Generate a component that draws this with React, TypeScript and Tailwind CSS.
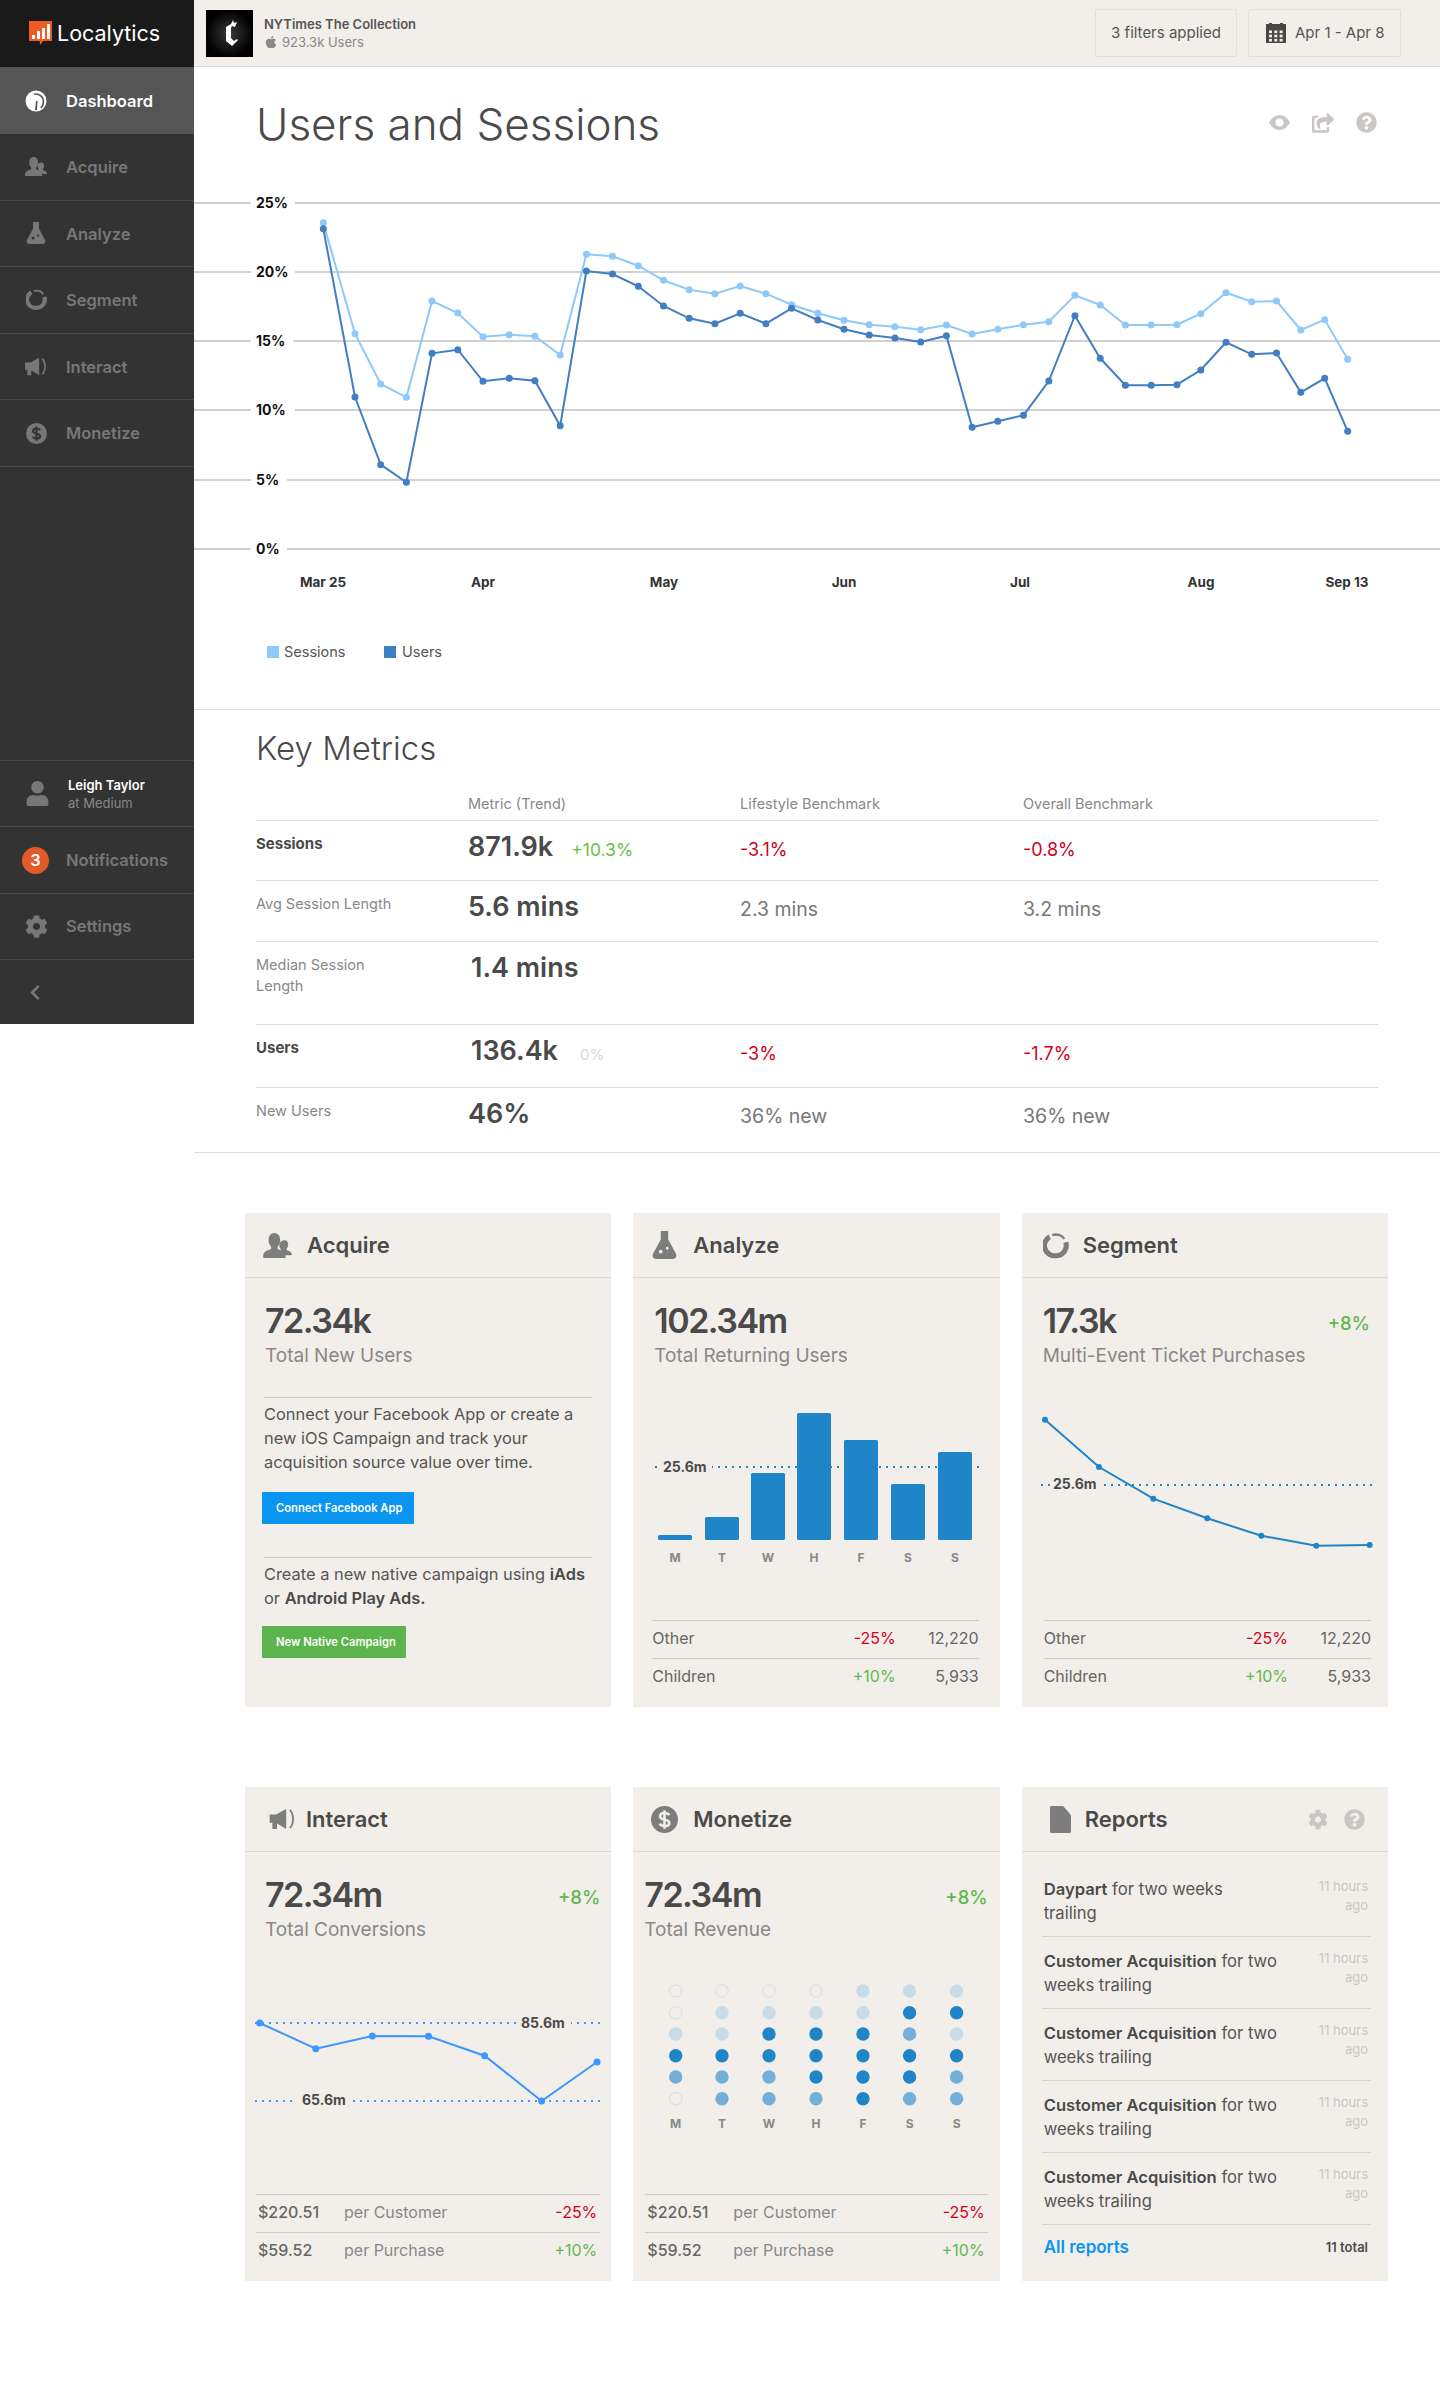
import { FaApple, FaChevronLeft, FaCog, FaQuestionCircle, FaShareSquare, FaUser } from "react-icons/fa";
import type { ReactNode } from "react";

// chart points, in page pixels
const X = [
  323.3, 355, 380.7, 406.4, 432, 457.8, 483, 509.2, 534.9, 560.2, 586.4, 612.5, 638.3, 663.5, 689.2, 714.9, 740.2,
  765.9, 791.6, 817.8, 844, 869.2, 894.9, 920.7, 946.4, 972.1, 997.8, 1023.5, 1048.8, 1074.9, 1100.2, 1125.4, 1151.2,
  1176.9, 1200.8, 1226, 1251.7, 1276.5, 1300.8, 1324.7, 1347.7,
];
const SESSIONS = [
  222.7, 333.7, 384, 397.3, 301, 313, 336.7, 334.7, 336.3, 355, 254.3, 256.3, 265.7, 280.3, 289.7, 293.7, 286, 293.7,
  304.7, 313.3, 320.3, 324.7, 326.7, 329.7, 325, 334, 329.3, 324.7, 321.7, 295.3, 305, 325, 325, 324.7, 313.7, 292.7,
  301.7, 301, 330, 319.7, 359.3,
];
const USERS = [
  228.7, 397, 464.7, 482.3, 353.3, 349.7, 381.3, 378.3, 380.7, 425.7, 271, 274, 286.3, 306, 318.3, 323.7, 313.3, 323.7,
  308.3, 320, 329.3, 335, 338, 342, 335.7, 427.3, 421.3, 415.3, 381, 315.7, 358.3, 385.3, 385.3, 384.7, 370, 342.3,
  354.3, 353, 392.3, 378.3, 431.3,
];
const GRID = [
  { y: 203, label: "25%", w: 44 },
  { y: 272, label: "20%", w: 44 },
  { y: 341, label: "15%", w: 42 },
  { y: 410, label: "10%", w: 44 },
  { y: 480, label: "5%", w: 36 },
  { y: 549, label: "0%", w: 36 },
];
const MONTHS = [
  { x: 323, t: "Mar 25" },
  { x: 483, t: "Apr" },
  { x: 664, t: "May" },
  { x: 844, t: "Jun" },
  { x: 1020, t: "Jul" },
  { x: 1201, t: "Aug" },
  { x: 1347, t: "Sep 13" },
];

const BARS = [
  { x: 658, top: 1535, d: "M" },
  { x: 705, top: 1517, d: "T" },
  { x: 751, top: 1473, d: "W" },
  { x: 797, top: 1413, d: "H" },
  { x: 844, top: 1440, d: "F" },
  { x: 891, top: 1484, d: "S" },
  { x: 938, top: 1452, d: "S" },
];

const DOTS = [
  { x: 675.7, d: "M", v: "ooldmo" },
  { x: 722, d: "T", v: "olldmm" },
  { x: 769, d: "W", v: "olddmm" },
  { x: 816, d: "H", v: "oldddm" },
  { x: 863, d: "F", v: "lldddd" },
  { x: 909.6, d: "S", v: "ldmddm" },
  { x: 956.6, d: "S", v: "ldldmm" },
];
const DOT_ROWS = [1991, 2012.7, 2034, 2055.7, 2077, 2098.7];
const DOT_FILL: Record<string, string> = { l: "#c7dce7", m: "#74afd9", d: "#2084c8" };

const pts = (xs: number[], ys: number[]) => xs.map((x, i) => `${x},${ys[i]}`).join(" ");

function GaugeIcon() {
  return (
    <svg width="22" height="22" viewBox="0 0 22 22">
      <circle cx="11" cy="11" r="10.5" fill="#fff" />
      <path d="M9 4.2a7.6 7.6 0 0 1 9.4 7.6c0 2.6-1 4.8-2.6 6.2" fill="none" stroke="#555" strokeWidth="1.6" />
      <path d="M10 20l1-9 1.6 0 -.6 9z" fill="#555" />
    </svg>
  );
}

function UsersIcon({ className }: { className?: string }) {
  return (
    <svg className={className} viewBox="0 0 32 28" fill="currentColor">
      <path d="M24 8c2.6 0 4 2.4 4 5 0 2-.8 3.6-1.8 4.6v1.4c2 .9 5.800 1.800 5.800 4.500v1.500h-8c-.8-2.500-3-3.600-5.500-4.700l1.300-.6v-1.600c-1-1-1.800-2.700-1.800-5 0-2.700 3-5.100 6-5.100z" />
      <path d="M12.500 0c4 0 6.500 3.400 6.500 8 0 3.200-1.200 5.700-2.800 7.200v2.800c3.500 1.600 8.800 2.800 8.800 7v3H0v-3c0-4.200 5.300-5.400 8.800-7v-2.800C7.200 13.700 6 11.200 6 8c0-4.600 2.500-8 6.500-8z" />
    </svg>
  );
}

function FlaskIcon({ className }: { className?: string }) {
  return (
    <svg className={className} viewBox="0 0 26 30" fill="currentColor">
      <path
        fillRule="evenodd"
        d="M9 0h8v9l8.300 15.500C26.500 27 25 30 22 30H4c-3 0-4.500-3-3.300-5.500L9 9zM9 20a2 2 0 1 0 0 4 2 2 0 0 0 0-4zm7-3a1.500 1.500 0 1 0 0 3 1.500 1.500 0 0 0 0-3z"
      />
    </svg>
  );
}

function SegmentIcon({ className }: { className?: string }) {
  return (
    <svg className={className} viewBox="0 0 28 28" fill="none" stroke="currentColor">
      <path d="M7.200 4.500A11 11 0 0 0 14 25a11 11 0 0 0 10.500-14.500" strokeWidth="5.500" />
      <path d="M10 2.900a11 11 0 0 1 13 4" strokeWidth="2.500" />
      <path d="M2.500 8l3 1.500" strokeWidth="3" />
    </svg>
  );
}

function HornIcon({ className }: { className?: string }) {
  return (
    <svg className={className} viewBox="0 0 28 24" fill="currentColor">
      <path d="M0 7h7l11-6v22L8 17v6H3v-7H0z" />
      <path d="M22 2c2.500 2.500 3.500 6 3.500 10s-1 7.500-3.500 10" fill="none" stroke="currentColor" strokeWidth="2" />
    </svg>
  );
}

function DollarIcon({ className, hole = "#f2efea" }: { className?: string; hole?: string }) {
  return (
    <svg className={className} viewBox="0 0 28 28">
      <circle cx="14" cy="14" r="14" fill="currentColor" />
      <path
        d="M19 9.500c-1-1.600-2.800-2.300-5-2.300-2.700 0-4.600 1.400-4.600 3.500 0 4.800 9.600 2.400 9.600 6.800 0 2-2 3.300-5 3.300-2.300 0-4-.8-5-2.500M14 4.500v19"
        fill="none"
        stroke={hole}
        strokeWidth="2.700"
      />
    </svg>
  );
}

function FileIcon({ className }: { className?: string }) {
  return (
    <svg className={className} viewBox="0 0 21 27" fill="currentColor">
      <path d="M1.500 0H12c1 0 1.500.4 2 1l6 7c.6.7 1 1.300 1 2v15.500c0 .9-.6 1.500-1.500 1.500h-18C.6 27 0 26.400 0 25.500v-24C0 .6.600 0 1.500 0z" />
    </svg>
  );
}

function EyeIcon() {
  return (
    <svg width="21" height="15" viewBox="0 0 21 15">
      <path d="M0 7.500C2.500 3 6 0 10.500 0S18.500 3 21 7.500C18.500 12 15 15 10.500 15S2.500 12 0 7.500z" fill="#c9c6c4" />
      <circle cx="10.500" cy="7.500" r="4" fill="#fff" />
    </svg>
  );
}

function CalendarIcon() {
  const cells = [];
  for (let r = 0; r < 3; r++) {
    for (let c = 0; c < 3; c++) {
      cells.push(<rect key={`${r}-${c}`} x={3 + c * 5.3} y={7.5 + r * 4.2} width="3" height="2.600" fill="#f2efea" />);
    }
  }
  return (
    <svg width="20" height="20" viewBox="0 0 20 20">
      <path d="M0 1h3V0h3v1h8V0h3v1h3v19H0z" fill="#4a4746" />
      {cells}
    </svg>
  );
}

function GothicMark() {
  return (
    <div className="w-[47px] h-[47px] bg-[radial-gradient(circle,#3a3a3a_0%,#000_70%)] flex items-center justify-center">
      <svg width="16" height="26" viewBox="0 0 16 26" fill="#fff">
        <path d="M11 0l1 3 3-1-2 5-3-1-1 2v10l3 3 3-2 1 1-6 6-6-5V7l5-3z" />
      </svg>
    </div>
  );
}

function LogoMark() {
  return (
    <svg width="24" height="25" viewBox="0 0 24 25">
      <path d="M0 0h23v20h-9l-2.500 4-1-4H0z" fill="#f15a24" />
      <rect x="3" y="14" width="3" height="4" fill="#fff" />
      <rect x="8" y="10" width="3" height="8" fill="#fff" />
      <rect x="13" y="7" width="3" height="11" fill="#fff" />
      <rect x="18" y="3" width="3" height="15" fill="#fff" />
    </svg>
  );
}

function NavRow({ icon, label, h = "h-[66.6px]", active }: { icon: ReactNode; label: string; h?: string; active?: boolean }) {
  return (
    <div
      className={`${h} flex items-center pl-[24px] gap-[18px] text-[16.5px] font-semibold ${
        active ? "bg-[#555] text-white" : "border-b border-[#4a4a4a] text-[#777]"
      }`}
    >
      <div className="w-[24px] flex justify-center shrink-0">{icon}</div>
      <span className="pt-[1px]">{label}</span>
    </div>
  );
}

function Sidebar() {
  return (
    <aside className="w-[194px] h-[1024px] shrink-0 bg-[#333] flex flex-col">
      <div className="h-[67px] bg-[#1a1a1a] flex items-center pl-[29px] gap-[4px] text-white text-[21.5px]">
        <LogoMark />
        <span>Localytics</span>
      </div>
      <NavRow active h="h-[67px]" icon={<GaugeIcon />} label="Dashboard" />
      <NavRow icon={<UsersIcon className="w-[22px] h-[19px]" />} label="Acquire" />
      <NavRow icon={<FlaskIcon className="w-[20px] h-[22px]" />} label="Analyze" />
      <NavRow icon={<SegmentIcon className="w-[21px] h-[21px]" />} label="Segment" />
      <NavRow icon={<HornIcon className="w-[22px] h-[19px]" />} label="Interact" />
      <NavRow icon={<DollarIcon className="w-[21px] h-[21px] text-[#777]" hole="#333" />} label="Monetize" />

      <div className="mt-auto">
        <div className="h-[66px] border-t border-[#4a4a4a] flex items-center pl-[25px] gap-[18px]">
          <FaUser className="w-[25px] h-[25px] text-[#777]" />
          <div className="text-[13px] leading-[18px]">
            <div className="text-white font-semibold">Leigh Taylor</div>
            <div className="text-[#888]">at Medium</div>
          </div>
        </div>
        <div className="h-[67px] border-t border-[#4a4a4a] flex items-center pl-[22px] gap-[17px] text-[16.5px] font-semibold text-[#777]">
          <div className="w-[27px] h-[27px] rounded-full bg-[#e25a28] text-white flex items-center justify-center">3</div>
          <span>Notifications</span>
        </div>
        <div className="h-[66px] border-t border-[#4a4a4a] flex items-center pl-[25px] gap-[18px] text-[16.5px] font-semibold text-[#777]">
          <FaCog className="w-[23px] h-[23px]" />
          <span>Settings</span>
        </div>
        <div className="h-[65px] border-t border-[#4a4a4a] flex items-center pl-[28px]">
          <FaChevronLeft className="w-[14px] h-[17px] text-[#777]" />
        </div>
      </div>
    </aside>
  );
}

function TopBar() {
  return (
    <header className="h-[67px] bg-[#f2efea] border-b border-[#dcd9d4] flex items-center pl-[12px] pr-[39px]">
      <GothicMark />
      <div className="ml-[11px] text-[13px] leading-[18px]">
        <div className="font-semibold text-[#555]">NYTimes The Collection</div>
        <div className="flex items-center gap-[4px] text-[#888]">
          <FaApple className="w-[14px] h-[14px]" />
          <span>923.3k Users</span>
        </div>
      </div>
      <div className="ml-auto w-[142px] h-[48px] border border-[#e4e1db] rounded-[2px] flex items-center justify-center text-[15px] text-[#555]">
        3 filters applied
      </div>
      <div className="ml-[11px] w-[153px] h-[48px] border border-[#e4e1db] rounded-[2px] flex items-center pl-[17px] gap-[9px] text-[15px] text-[#555]">
        <CalendarIcon />
        <span>Apr 1 - Apr 8</span>
      </div>
    </header>
  );
}

function TrendChart() {
  return (
    <svg className="block w-[1246px] h-[410px]" viewBox="194 190 1246 410">
      {GRID.map((g) => (
        <g key={g.y}>
          <line x1="194" x2="1440" y1={g.y} y2={g.y} stroke="#a3a3a3" strokeWidth="1" />
          <rect x="251" y={g.y - 8} width={g.w} height="16" fill="#fff" />
          <text x="256" y={g.y + 5} className="text-[14px] font-bold fill-[#111]">
            {g.label}
          </text>
        </g>
      ))}
      <polyline points={pts(X, SESSIONS)} fill="none" stroke="#8ec9f9" strokeWidth="2" />
      {X.map((x, i) => (
        <circle key={i} cx={x} cy={SESSIONS[i]} r="3.5" fill="#8ec9f9" />
      ))}
      <polyline points={pts(X, USERS)} fill="none" stroke="#427ec2" strokeWidth="2" />
      {X.map((x, i) => (
        <circle key={i} cx={x} cy={USERS[i]} r="3.5" fill="#427ec2" />
      ))}
      {MONTHS.map((m) => (
        <text key={m.t} x={m.x} y="587" textAnchor="middle" className="text-[13.5px] font-bold fill-[#333]">
          {m.t}
        </text>
      ))}
    </svg>
  );
}

function UsersSessions() {
  return (
    <section className="h-[643px] border-b border-[#dddddd] relative">
      <h1 className="h-[123px] pl-[62px] pt-[34px] text-[44px] leading-[46px] font-light text-[#4a4a4a]">Users and Sessions</h1>
      <div className="absolute right-[63px] top-[45px] flex items-center gap-[22px] text-[#c9c6c4]">
        <EyeIcon />
        <FaShareSquare className="w-[22px] h-[20px]" />
        <FaQuestionCircle className="w-[21px] h-[21px]" />
      </div>
      <TrendChart />
      <div className="pl-[73px] pt-[41px] flex items-center text-[14.5px] text-[#555]">
        <span className="w-[12px] h-[12px] bg-[#8ecbfb]" />
        <span className="ml-[5px] w-[100px]">Sessions</span>
        <span className="w-[12px] h-[12px] bg-[#3b7fc4]" />
        <span className="ml-[6px]">Users</span>
      </div>
    </section>
  );
}

type MetricRow = {
  label: string;
  strong?: boolean;
  value: string;
  inset?: boolean;
  trend?: ReactNode;
  life?: ReactNode;
  over?: ReactNode;
  h: string;
  border?: boolean;
};

const red = (t: string) => <span className="text-[18px] text-[#d0021b]">{t}</span>;

const METRICS: MetricRow[] = [
  {
    label: "Sessions",
    strong: true,
    value: "871.9k",
    trend: <span className="ml-[18px] text-[17.5px] text-[#6abf45]">+10.3%</span>,
    life: red("-3.1%"),
    over: red("-0.8%"),
    h: "h-[60px]",
    border: true,
  },
  { label: "Avg Session Length", value: "5.6 mins", life: "2.3 mins", over: "3.2 mins", h: "h-[61px]", border: true },
  { label: "Median Session Length", value: "1.4 mins", inset: true, h: "h-[83px]", border: true },
  {
    label: "Users",
    strong: true,
    value: "136.4k",
    inset: true,
    trend: <span className="ml-[22px] text-[15px] text-[#d8d8d8]">0%</span>,
    life: red("-3%"),
    over: red("-1.7%"),
    h: "h-[63px]",
    border: true,
  },
  { label: "New Users", value: "46%", life: "36% new", over: "36% new", h: "h-[64px]" },
];

function KeyMetrics() {
  return (
    <section className="border-b border-[#dddddd] pl-[62px] pr-[62px]">
      <h2 className="pt-[18px] h-[70px] text-[33px] leading-[40px] font-light text-[#4a4a4a]">Key Metrics</h2>
      <div className="grid grid-cols-[212px_272px_283px_1fr] h-[41px] pt-[13px] border-b border-[#dddddd] text-[14.5px] text-[#888]">
        <div />
        <div>Metric (Trend)</div>
        <div>Lifestyle Benchmark</div>
        <div>Overall Benchmark</div>
      </div>
      {METRICS.map((m) => (
        <div key={m.label} className={`grid grid-cols-[212px_272px_283px_1fr] ${m.h} ${m.border ? "border-b border-[#dddddd]" : ""}`}>
          <div
            className={`pt-[12px] leading-[21px] pr-[66px] ${
              m.strong ? "text-[15px] font-bold text-[#4a4a4a]" : "text-[14.5px] text-[#888]"
            }`}
          >
            {m.label}
          </div>
          <div className={`pt-[11px] flex items-baseline h-fit ${m.inset ? "pl-[3px]" : ""}`}>
            <span className="text-[27px] leading-[30px] font-semibold text-[#4a4a4a]">{m.value}</span>
            {m.trend}
          </div>
          <div className="pt-[16px] text-[19.5px] leading-[24px] text-[#777]">{m.life}</div>
          <div className="pt-[16px] text-[19.5px] leading-[24px] text-[#777]">{m.over}</div>
        </div>
      ))}
    </section>
  );
}

function Card({ icon, title, right, children }: { icon: ReactNode; title: string; right?: ReactNode; children: ReactNode }) {
  return (
    <div className="h-[494px] bg-[#f2efea] flex flex-col">
      <div className="h-[65px] shrink-0 border-b border-[#dcd9d4] flex items-center">
        {icon}
        <span className="text-[22px] font-semibold text-[#4a4a4a]">{title}</span>
        {right}
      </div>
      {children}
    </div>
  );
}

function Stat({ value, label, delta, x = "pl-[20px] pr-[11px]" }: { value: string; label: string; delta?: string; x?: string }) {
  return (
    <div className={`${x} pt-[23px] shrink-0`}>
      <div className="flex items-center justify-between">
        <span className="text-[34px] leading-[40px] font-semibold tracking-[-1.5px] text-[#4a4a4a]">{value}</span>
        {delta && <span className="mt-[5px] text-[18.5px] font-medium text-[#5fb84f]">{delta}</span>}
      </div>
      <div className="mt-[3px] text-[19px] leading-[24px] text-[#888]">{label}</div>
    </div>
  );
}

function Foot({ rows, x }: { rows: ReactNode[][]; x: string }) {
  return (
    <div className={`mt-auto mb-[12px] ${x} text-[16px] text-[#666]`}>
      {rows.map((r, i) => (
        <div key={i} className="h-[37.5px] pb-[2px] border-t border-[#cfccc8] flex items-center">
          {r}
        </div>
      ))}
    </div>
  );
}

const down = <span className="text-[#d0021b]">-25%</span>;
const up = <span className="text-[#5fb84f]">+10%</span>;

function splitRows(): ReactNode[][] {
  return [
    [
      <span key="a">Other</span>,
      <span key="b" className="ml-auto">{down}</span>,
      <span key="c" className="w-[83px] text-right">12,220</span>,
    ],
    [
      <span key="a">Children</span>,
      <span key="b" className="ml-auto">{up}</span>,
      <span key="c" className="w-[83px] text-right">5,933</span>,
    ],
  ];
}

function perRows(): ReactNode[][] {
  return [
    [
      <span key="a" className="pl-[2px] w-[88px] font-medium">$220.51</span>,
      <span key="b" className="text-[#888]">per Customer</span>,
      <span key="c" className="ml-auto pr-[3px]">{down}</span>,
    ],
    [
      <span key="a" className="pl-[2px] w-[88px] font-medium">$59.52</span>,
      <span key="b" className="text-[#888]">per Purchase</span>,
      <span key="c" className="ml-auto pr-[3px]">{up}</span>,
    ],
  ];
}

function AcquireCard() {
  const para = "text-[16.4px] leading-[24px] text-[#555]";
  return (
    <Card
      icon={<UsersIcon className="ml-[17px] mr-[14px] w-[31px] h-[25px] text-[#7d7d7d]" />}
      title="Acquire"
    >
      <Stat value="72.34k" label="Total New Users" />
      <div className="mx-[19px] mt-[29px] border-t border-[#cfccc8] pt-[4px]">
        <p className={para}>Connect your Facebook App or create a new iOS Campaign and track your acquisition source value over time.</p>
      </div>
      <button className="ml-[17px] mt-[18px] w-[152px] h-[32px] rounded-[1px] bg-[#0a96f0] text-white text-[11.2px] font-semibold text-left pl-[14px]">
        Connect Facebook App
      </button>
      <div className="mx-[19px] mt-[33px] border-t border-[#cfccc8] pt-[4px]">
        <p className={para}>
          Create a new native campaign using <b className="font-semibold text-[#4a4a4a]">iAds</b> or{" "}
          <b className="font-semibold text-[#4a4a4a]">Android Play Ads.</b>
        </p>
      </div>
      <button className="ml-[17px] mt-[16px] w-[144px] h-[32px] rounded-[1px] bg-[#5cb54c] text-white text-[11.2px] font-semibold text-left pl-[14px]">
        New Native Campaign
      </button>
    </Card>
  );
}

function AnalyzeCard() {
  return (
    <Card icon={<FlaskIcon className="ml-[18px] mr-[15px] w-[27px] h-[28px] text-[#7d7d7d]" />} title="Analyze">
      <Stat value="102.34m" label="Total Returning Users" x="pl-[21px] pr-[11px]" />
      <svg className="block mt-[32px] w-[367px] h-[170px] shrink-0" viewBox="633 1400 367 170">
        {BARS.map((b) => (
          <g key={b.x}>
            <rect x={b.x} y={b.top} width="34" height={1540 - b.top} rx="1.5" fill="#2084c8" />
            <text x={b.x + 17} y="1562" textAnchor="middle" className="text-[12px] font-bold fill-[#888]">
              {b.d}
            </text>
          </g>
        ))}
        <line x1="655" x2="981" y1="1467" y2="1467" stroke="#2084c8" strokeWidth="2" strokeDasharray="2 5" />
        <rect x="660" y="1458" width="52" height="18" fill="#f2efea" />
        <text x="663" y="1472" className="text-[14px] font-bold fill-[#4a4a4a]">
          25.6m
        </text>
      </svg>
      <Foot rows={splitRows()} x="ml-[19px] mr-[21px]" />
    </Card>
  );
}

function SegmentCard() {
  const line = [
    [1045, 1419.7],
    [1099, 1467],
    [1153.3, 1498.7],
    [1207.3, 1518.3],
    [1261.3, 1535.7],
    [1316.3, 1545.7],
    [1369.7, 1545],
  ];
  return (
    <Card icon={<SegmentIcon className="ml-[21px] mr-[14px] w-[26px] h-[27px] text-[#7d7d7d]" />} title="Segment">
      <Stat value="17.3k" label="Multi-Event Ticket Purchases" delta="+8%" x="pl-[21px] pr-[18px]" />
      <svg className="block mt-[32px] w-[366px] h-[170px] shrink-0" viewBox="1022 1400 366 170">
        <line x1="1041" x2="1373" y1="1485" y2="1485" stroke="#2084c8" strokeWidth="2" strokeDasharray="2 5" />
        <rect x="1050" y="1476" width="52" height="18" fill="#f2efea" />
        <text x="1053" y="1489" className="text-[14px] font-bold fill-[#4a4a4a]">
          25.6m
        </text>
        <polyline points={line.map((p) => p.join(",")).join(" ")} fill="none" stroke="#2084c8" strokeWidth="2" />
        {line.map((p) => (
          <circle key={p[0]} cx={p[0]} cy={p[1]} r="3" fill="#2084c8" />
        ))}
      </svg>
      <Foot rows={splitRows()} x="ml-[22px] mr-[17px]" />
    </Card>
  );
}

function InteractCard() {
  const line = [
    [259.7, 2023],
    [315.8, 2048.7],
    [372.3, 2036],
    [428.5, 2036.3],
    [484.6, 2055.7],
    [541.6, 2101],
    [597, 2062],
  ];
  return (
    <Card icon={<HornIcon className="ml-[24px] mr-[10px] w-[27px] h-[22px] text-[#7d7d7d]" />} title="Interact">
      <Stat value="72.34m" label="Total Conversions" delta="+8%" />
      <svg className="block mt-[33px] w-[366px] h-[200px] shrink-0" viewBox="245 1975 366 200">
        <line x1="255" x2="601" y1="2023" y2="2023" stroke="#3d97ff" strokeWidth="2" strokeDasharray="2 5" />
        <line x1="255" x2="601" y1="2101" y2="2101" stroke="#3d97ff" strokeWidth="2" strokeDasharray="2 5" />
        <rect x="517" y="2014" width="54" height="18" fill="#f2efea" />
        <rect x="297" y="2092" width="56" height="18" fill="#f2efea" />
        <text x="521" y="2028" className="text-[14px] font-bold fill-[#4a4a4a]">
          85.6m
        </text>
        <text x="302" y="2105" className="text-[14px] font-bold fill-[#4a4a4a]">
          65.6m
        </text>
        <polyline points={line.map((p) => p.join(",")).join(" ")} fill="none" stroke="#3d97ff" strokeWidth="2" />
        {line.map((p) => (
          <circle key={p[0]} cx={p[0]} cy={p[1]} r="3.5" fill="#3d97ff" />
        ))}
      </svg>
      <Foot rows={perRows()} x="ml-[11px] mr-[11px]" />
    </Card>
  );
}

function MonetizeCard() {
  return (
    <Card icon={<DollarIcon className="ml-[18px] mr-[15px] w-[27px] h-[27px] text-[#7d7d7d]" />} title="Monetize">
      <Stat value="72.34m" label="Total Revenue" delta="+8%" x="pl-[11px] pr-[12px]" />
      <svg className="block mt-[33px] w-[367px] h-[200px] shrink-0" viewBox="633 1975 367 200">
        {DOTS.map((c, i) => (
          <g key={i}>
            {DOT_ROWS.map((y, j) => {
              const v = c.v[j];
              return v === "o" ? (
                <circle key={j} cx={c.x} cy={y} r="6.2" fill="none" stroke="#cfe0e6" strokeWidth="1" />
              ) : (
                <circle key={j} cx={c.x} cy={y} r="6.7" fill={DOT_FILL[v]} />
              );
            })}
            <text x={c.x} y="2128" textAnchor="middle" className="text-[12px] font-bold fill-[#888]">
              {c.d}
            </text>
          </g>
        ))}
      </svg>
      <Foot rows={perRows()} x="ml-[12px] mr-[12px]" />
    </Card>
  );
}

function ReportsCard() {
  const rows = ["Daypart", "Customer Acquisition", "Customer Acquisition", "Customer Acquisition", "Customer Acquisition"];
  return (
    <Card
      icon={<FileIcon className="ml-[28px] mr-[14px] w-[21px] h-[27px] text-[#7d7d7d]" />}
      title="Reports"
      right={
        <div className="ml-auto mr-[23px] flex items-center gap-[16px] text-[#c9c6c4]">
          <FaCog className="w-[20px] h-[21px]" />
          <FaQuestionCircle className="w-[21px] h-[21px]" />
        </div>
      }
    >
      <div className="pl-[20px] pr-[17px] pt-[13px]">
        {rows.map((r, i) => (
          <div key={i} className="h-[72px] border-b border-[#d6d3ce] flex pt-[12px] pl-[2px] pr-[3px]">
            <div className="flex-1 min-w-0 text-[16.6px] leading-[24px] text-[#555]">
              <b className="font-semibold text-[#4a4a4a]">{r}</b> for two{" "}
              {i === 0 ? (
                <>
                  weeks
                  <br />
                  trailing
                </>
              ) : (
                <>
                  <br />
                  weeks trailing
                </>
              )}
            </div>
            <div className="w-[50px] shrink-0 text-right text-[13px] leading-[18.5px] text-[#c9c6c4]">11 hours ago</div>
          </div>
        ))}
        <div className="flex items-center justify-between h-[46px] pl-[2px] pr-[3px]">
          <span className="text-[17px] font-semibold text-[#0a96f0]">All reports</span>
          <span className="text-[13px] font-semibold text-[#4a4a4a]">11 total</span>
        </div>
      </div>
    </Card>
  );
}

export default function App() {
  return (
    <div className="flex bg-white font-[Inter,sans-serif] w-[1440px]">
      <Sidebar />
      <main className="flex-1 min-w-0">
        <TopBar />
        <UsersSessions />
        <KeyMetrics />
        <section className="pl-[51px] pr-[52px] pt-[60px] pb-[111px] grid grid-cols-3 gap-x-[22px] gap-y-[80px]">
          <AcquireCard />
          <AnalyzeCard />
          <SegmentCard />
          <InteractCard />
          <MonetizeCard />
          <ReportsCard />
        </section>
      </main>
    </div>
  );
}
